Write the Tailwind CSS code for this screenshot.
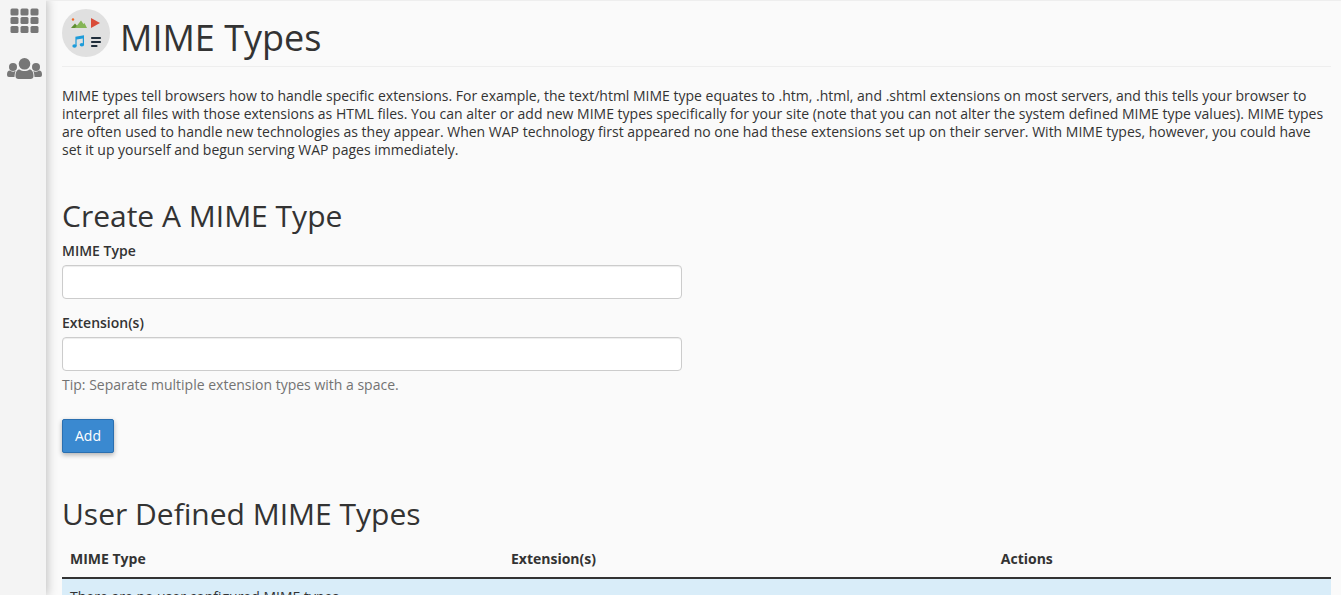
<!DOCTYPE html>
<html lang="en">
<head>
  <meta charset="UTF-8" />
  <meta name="viewport" content="width=device-width, initial-scale=1.0" />
  <title>MIME Types</title>
  <script src="https://cdn.jsdelivr.net/npm/@tailwindcss/browser@4"></script>
</head>
<body class="flex h-screen overflow-hidden bg-[#fafafa] font-['Open_Sans',sans-serif] text-sm leading-[18px] text-[#333]">
  <!-- Sidebar -->
  <nav class="flex w-[46px] shrink-0 flex-col bg-[#f4f4f4] pl-[7px] pt-2 shadow-[0_0_10px_1px_rgba(0,0,0,0.25)]">
    <a href="#" aria-label="Home" class="block pl-[3px]">
      <svg class="h-[26px] w-[29px]" viewBox="0 0 29 26" fill="#777">
        <rect x="0.5" y="0.5" width="8" height="7" rx="1.5" /><rect x="10.5" y="0.5" width="8" height="7" rx="1.5" /><rect x="20.5" y="0.5" width="8" height="7" rx="1.5" />
        <rect x="0.5" y="9" width="8" height="7" rx="1.5" /><rect x="10.5" y="9" width="8" height="7" rx="1.5" /><rect x="20.5" y="9" width="8" height="7" rx="1.5" />
        <rect x="0.5" y="18" width="8" height="7" rx="1.5" /><rect x="10.5" y="18" width="8" height="7" rx="1.5" /><rect x="20.5" y="18" width="8" height="7" rx="1.5" />
      </svg>
    </a>
    <a href="#" aria-label="User Manager" class="mt-6 block">
      <svg class="h-[22px] w-[35px]" viewBox="0 0 35 22" fill="#777">
        <circle cx="6" cy="9" r="4" /><circle cx="29" cy="9" r="4" />
        <path d="M0 16.5C0 14 1 12.5 3 12.5C5 14 8 14 9 12.8C8 14 7.7 16 7.5 19H2C0.7 19 0 18.2 0 16.5Z" />
        <path d="M35 16.5C35 14 34 12.5 32 12.5C30 14 27 14 26 12.8C27 14 27.3 16 27.5 19H33C34.3 19 35 18.2 35 16.5Z" />
        <circle cx="17.5" cy="5.8" r="5.8" />
        <path d="M8.5 18C8.5 14 10 11.5 12.5 11.5C15.5 13.5 19.5 13.5 22.5 11.5C25 11.5 26.5 14 26.5 18C26.5 20 25.3 21 23.5 21H11.5C9.7 21 8.5 20 8.5 18Z" />
      </svg>
    </a>
  </nav>

  <main class="min-w-0 flex-1 border-t border-[#eee] pl-4 pr-[10px]">
    <!-- Page header -->
    <header class="flex gap-[10px] border-b border-[#eee] pb-2 pt-2">
      <svg class="h-12 w-12 shrink-0" viewBox="0 0 48 48" aria-hidden="true">
        <circle cx="24" cy="24" r="24" fill="#e0e0e0" />
        <circle cx="11" cy="10.5" r="1.2" fill="#f26522" />
        <path d="M9 19L13 14.5L17 19Z" fill="#5f8f32" />
        <path d="M13 19L19 11.5L21.5 15L22.5 14L25 19Z" fill="#85b556" />
        <path d="M29 9L38 14L29 19Z" fill="#d94b38" />
        <path d="M13.4 27.8L22 26.2V36H20.8V29.4L14.6 30.6V37H13.4Z" fill="#1d9bd9" />
        <ellipse cx="12.5" cy="37" rx="2.2" ry="1.8" fill="#1d9bd9" />
        <ellipse cx="19.9" cy="35.8" rx="2.2" ry="1.8" fill="#1d9bd9" />
        <path d="M30 29H38M30 33H38M30 37H34.5" stroke="#1f2d3a" stroke-width="2.2" stroke-linecap="round" />
      </svg>
      <h1 class="pt-[9px] text-4xl">MIME Types</h1>
    </header>

    <p class="mt-5">MIME types tell browsers how to handle specific extensions. For example, the text/html MIME type equates to .htm, .html, and .shtml extensions on most servers, and this tells your browser to interpret all files with those extensions as HTML files. You can alter or add new MIME types specifically for your site (note that you can not alter the system defined MIME type values). MIME types are often used to handle new technologies as they appear. When WAP technology first appeared no one had these extensions set up on their server. With MIME types, however, you could have set it up yourself and begun serving WAP pages immediately.</p>

    <!-- Create form -->
    <h2 class="mt-10 text-3xl leading-[33px]">Create A MIME Type</h2>
    <form class="mt-[10px]">
      <label for="mimetype" class="block font-semibold">MIME Type</label>
      <input id="mimetype" type="text" class="mt-[5px] block h-[34px] w-full max-w-[620px] rounded border border-[#ccc] bg-white px-3 shadow-[inset_0_1px_1px_rgba(0,0,0,0.075)]" />
      <label for="extension" class="mt-[15px] block font-semibold">Extension(s)</label>
      <input id="extension" type="text" class="mt-[5px] block h-[34px] w-full max-w-[620px] rounded border border-[#ccc] bg-white px-3 shadow-[inset_0_1px_1px_rgba(0,0,0,0.075)]" />
      <p class="mt-[5px] text-[#737373]">Tip: Separate multiple extension types with a space.</p>
      <button type="button" class="mt-[25px] block h-[34px] rounded-xs border border-[#2a6fb0] bg-[#3a89d0] px-3 text-white shadow-[0_2px_5px_rgba(0,0,0,0.3)]">Add</button>
    </form>

    <!-- User defined types -->
    <h2 class="mt-11 text-3xl leading-[33px]">User Defined MIME Types</h2>
    <table class="mt-[10px] w-full table-fixed border-collapse text-left">
      <thead>
        <tr class="border-b-2 border-[#333]">
          <th class="w-[34.75%] px-2 pb-[9px] pt-[10px] font-bold">MIME Type</th>
          <th class="w-[38.6%] px-2 pb-[9px] pt-[10px] font-bold">Extension(s)</th>
          <th class="px-2 pb-[9px] pt-[10px] font-bold">Actions</th>
        </tr>
      </thead>
      <tbody>
        <tr class="bg-[#d9edf9]">
          <td colspan="3" class="px-2 pb-2 pt-[9px]">There are no user configured MIME types.</td>
        </tr>
      </tbody>
    </table>
  </main>
</body>
</html>
